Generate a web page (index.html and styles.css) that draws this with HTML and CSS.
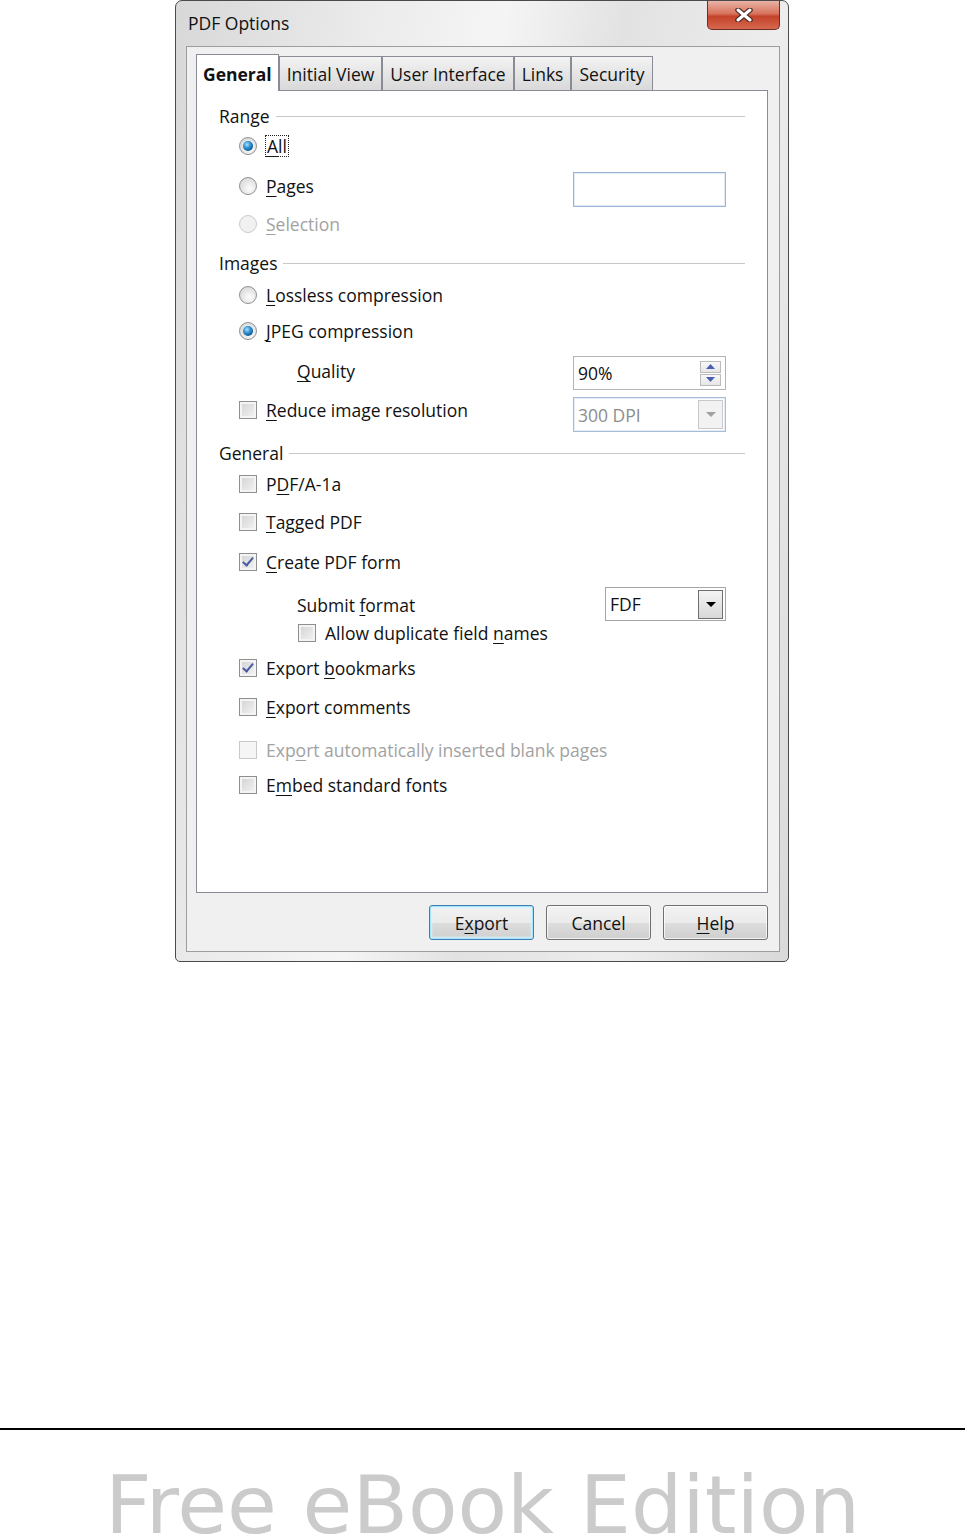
FILE: index.html
```html
<!DOCTYPE html>
<html lang="en">
<head>
    <meta charset="UTF-8">
    <meta name="viewport" content="width=device-width, initial-scale=1.0">
    <title>PDF Options</title>
    <link rel="stylesheet" href="styles.css">
</head>
<body>
    <div class="window">
        <div class="titlebar">
            <span class="title">PDF Options</span>
            <div class="close">
                <svg width="22" height="14" viewBox="0 0 22 14">
                    <path d="M5 2 L17 12 M17 2 L5 12" stroke="#4a2a2a" stroke-width="5.5" stroke-linecap="round"/>
                    <path d="M5 2 L17 12 M17 2 L5 12" stroke="#fff" stroke-width="3" stroke-linecap="round"/>
                </svg>
            </div>
        </div>

        <div class="client">
            <div class="tabs">
                <div class="tab active">General</div>
                <div class="tab">Initial View</div>
                <div class="tab">User Interface</div>
                <div class="tab">Links</div>
                <div class="tab">Security</div>
            </div>

            <div class="panel">
                <!-- Range -->
                <div class="group">Range</div>
                <div class="row opt mt-6"><span class="radio checked"></span><span class="focus"><u>A</u>ll</span></div>
                <div class="row tall opt mt-14">
                    <span class="line mt-in-2"><span class="radio"></span><span><u>P</u>ages</span></span>
                    <div class="textbox pages"></div>
                </div>
                <div class="row opt disabled mt-5"><span class="radio"></span><span><u>S</u>election</span></div>

                <!-- Images -->
                <div class="group mt-15">Images</div>
                <div class="row opt mt-8"><span class="radio"></span><span><u>L</u>ossless compression</span></div>
                <div class="row opt mt-12"><span class="radio checked"></span><span><u>J</u>PEG compression</span></div>
                <div class="row tall sub mt-13">
                    <span class="line mt-in-3"><span><u>Q</u>uality</span></span>
                    <div class="textbox spin">
                        <span class="val">90%</span>
                        <div class="spinbtns">
                            <span class="sb"><svg width="9" height="5" viewBox="0 0 9 5"><path d="M0 5 L4.5 0 L9 5Z" fill="#4a5fae"/></svg></span>
                            <span class="sb"><svg width="9" height="5" viewBox="0 0 9 5"><path d="M0 0 L4.5 5 L9 0Z" fill="#4a5fae"/></svg></span>
                        </div>
                    </div>
                </div>
                <div class="row tall opt mt-7">
                    <span class="line mt-in-1"><span class="check"></span><span><u>R</u>educe image resolution</span></span>
                    <div class="textbox combo off">
                        <span class="val">300 DPI</span>
                        <span class="drop"><svg width="10" height="5" viewBox="0 0 10 5"><path d="M0 0 L5 5 L10 0Z" fill="#a0a0a0"/></svg></span>
                    </div>
                </div>

                <!-- General -->
                <div class="group mt-9">General</div>
                <div class="row opt mt-7"><span class="check"></span><span>P<u>D</u>F/A-1a</span></div>
                <div class="row opt mt-14"><span class="check"></span><span><u>T</u>agged PDF</span></div>
                <div class="row opt mt-16"><span class="check on"></span><span><u>C</u>reate PDF form</span></div>
                <div class="row tall sub mt-13">
                    <span class="line mt-in-6"><span>Submit <u>f</u>ormat</span></span>
                    <div class="textbox combo fdf">
                        <span class="val">FDF</span>
                        <span class="drop"><svg width="10" height="5" viewBox="0 0 10 5"><path d="M0 0 L5 5 L10 0Z" fill="#000"/></svg></span>
                    </div>
                </div>
                <div class="row sub2"><span class="check"></span><span>Allow duplicate field <u>n</u>ames</span></div>
                <div class="row opt mt-11"><span class="check on"></span><span>Export <u>b</u>ookmarks</span></div>
                <div class="row opt mt-15"><span class="check"></span><span><u>E</u>xport comments</span></div>
                <div class="row opt disabled mt-19"><span class="check"></span><span>Exp<u>o</u>rt automatically inserted blank pages</span></div>
                <div class="row opt mt-11"><span class="check"></span><span>E<u>m</u>bed standard fonts</span></div>
            </div>

            <div class="actions">
                <button class="btn default">E<u>x</u>port</button>
                <button class="btn">Cancel</button>
                <button class="btn"><u>H</u>elp</button>
            </div>
        </div>
    </div>

    <div class="rule"></div>
    <div class="watermark">Free eBook Edition</div>
</body>
</html>
```

FILE: styles.css
```css
html, body {
    margin: 0;
    height: 1539px;
    overflow: hidden;
    background-color: #fff;
}

body {
    font-family: "Open Sans", "Noto Sans", sans-serif;
    font-size: 17.5px;
    color: #111;
}

u {
    text-decoration-thickness: 1px;
    text-underline-offset: 3px;
}

/* window frame */
.window {
    margin-left: 175px;
    width: 614px;
    height: 962px;
    box-sizing: border-box;
    border: 1px solid #4a4a4a;
    border-radius: 7px 7px 5px 5px;
    background: linear-gradient(100deg, #d8d8d8 0%, #ebebeb 25%, #f5f5f5 42%, #e2e2e2 58%, #ededed 78%, #d9d9d9 100%);
    display: flex;
    flex-direction: column;
}

.titlebar {
    height: 45px;
    display: flex;
    justify-content: space-between;
    align-items: flex-start;
}

.title {
    margin: 10px 0 0 12px;
    line-height: 24px;
    color: #111;
}

.close {
    width: 73px;
    height: 29px;
    margin-right: 8px;
    box-sizing: border-box;
    border: 1px solid #6e2c22;
    border-top: none;
    border-radius: 0 0 5px 5px;
    background: linear-gradient(#e8b3a6 0%, #d8735d 45%, #c4432b 55%, #d5684f 100%);
    display: flex;
    align-items: center;
    justify-content: center;
}

.client {
    flex: 1;
    margin: 0 8px 9px 10px;
    padding: 7px 11px 11px 9px;
    border: 1px solid #9d9d9d;
    background-color: #f0f0f0;
    display: flex;
    flex-direction: column;
}

/* tabs */
.tabs {
    display: flex;
    align-items: flex-end;
    height: 36px;
}

.tab {
    height: 34px;
    box-sizing: border-box;
    padding: 0 7px;
    border: 1px solid #898c95;
    border-bottom: none;
    background: linear-gradient(#f3f3f3, #e5e5e5 50%, #d9d9d9);
    line-height: 34px;
    white-space: nowrap;
}

.tab.active {
    height: 37px;
    margin-bottom: -1px;
    padding: 0 6px;
    background: #fff;
    font-weight: bold;
    line-height: 38px;
    position: relative;
    z-index: 1;
}

.panel {
    flex: 1;
    border: 1px solid #898c95;
    background-color: #fff;
    padding: 13px 22px 0 22px;
}

/* rows */
.group {
    display: flex;
    align-items: center;
    height: 24px;
}

.group::after {
    content: "";
    flex: 1;
    height: 1px;
    margin-left: 6px;
    background-color: #c8c8c8;
}

.row {
    display: flex;
    align-items: center;
    height: 24px;
    white-space: nowrap;
}

.row.tall {
    height: auto;
    align-items: flex-start;
}

.line {
    display: flex;
    align-items: center;
    height: 24px;
}

.opt {
    padding-left: 20px;
}

.sub {
    padding-left: 78px;
}

.sub2 {
    padding-left: 79px;
}

.disabled {
    color: #a2a2a2;
}

.focus {
    outline: 1px dotted #222;
    outline-offset: 0;
    padding: 0 1px;
    line-height: 20px;
}

.mt-5 { margin-top: 5px; }
.mt-6 { margin-top: 6px; }
.mt-7 { margin-top: 7px; }
.mt-8 { margin-top: 8px; }
.mt-9 { margin-top: 9px; }
.mt-11 { margin-top: 11px; }
.mt-12 { margin-top: 12px; }
.mt-13 { margin-top: 13px; }
.mt-14 { margin-top: 14px; }
.mt-15 { margin-top: 15px; }
.mt-16 { margin-top: 16px; }
.mt-19 { margin-top: 19px; }
.mt-in-1 { margin-top: 1px; }
.mt-in-2 { margin-top: 2px; }
.mt-in-3 { margin-top: 3px; }
.mt-in-6 { margin-top: 6px; }

/* radio and check */
.radio {
    width: 18px;
    height: 18px;
    box-sizing: border-box;
    margin-right: 9px;
    border: 1px solid #8f9195;
    border-radius: 50%;
    background: radial-gradient(circle at 60% 65%, #fdfdfd 0%, #e8e8e8 45%, #cfcfcf 100%);
    display: flex;
    align-items: center;
    justify-content: center;
    flex: none;
}

.radio.checked::after {
    content: "";
    width: 10px;
    height: 10px;
    border-radius: 50%;
    background: radial-gradient(circle at 40% 35%, #a8e4ff 0%, #3c9ad6 35%, #0b5d9e 70%, #063a66 100%);
}

.disabled .radio {
    border-color: #cbcbcb;
    background: #f1f1f1;
}

.check {
    width: 18px;
    height: 18px;
    box-sizing: border-box;
    margin-right: 9px;
    border: 1px solid #8e8f8f;
    background: linear-gradient(135deg, #d2d2d2, #f4f4f4);
    box-shadow: inset 0 0 0 2px #f4f4f4;
    flex: none;
    position: relative;
}

.check.on::after {
    content: "";
    position: absolute;
    left: 5px;
    top: 1px;
    width: 4px;
    height: 9px;
    border: solid #4a5da4;
    border-width: 0 2.5px 2.5px 0;
    transform: rotate(40deg);
}

.disabled .check {
    border-color: #c9c9c9;
    background: #f5f5f5;
    box-shadow: none;
}

/* fields */
.textbox {
    margin-left: auto;
    margin-right: 19px;
    width: 153px;
    height: 35px;
    box-sizing: border-box;
    border: 1px solid #abadb3;
    background-color: #fff;
    display: flex;
    align-items: center;
}

.textbox.pages {
    border-color: #9ab4d3;
    box-shadow: inset 0 0 0 1px #e2eaf4;
}

.textbox .val {
    flex: 1;
    padding-left: 4px;
}

.textbox.spin {
    height: 34px;
    border-color: #b4b4b4;
}

.spinbtns {
    display: flex;
    flex-direction: column;
    gap: 1px;
    margin-right: 4px;
}

.sb {
    width: 21px;
    height: 12px;
    box-sizing: border-box;
    border: 1px solid #bcbcbc;
    background: linear-gradient(#f8f8f8, #e6e6e6);
    display: flex;
    align-items: center;
    justify-content: center;
}

.drop {
    width: 25px;
    height: 29px;
    margin-right: 2px;
    box-sizing: border-box;
    border: 1px solid #707070;
    background: linear-gradient(#f4f4f4, #e6e6e6 50%, #d8d8d8);
    display: flex;
    align-items: center;
    justify-content: center;
}

.combo.off {
    border-color: #a7bcd6;
    box-shadow: inset 0 0 0 1px #e5ecf5;
    color: #8d8d8d;
}

.combo.off .drop {
    border-color: #c9c9c9;
    background: #f2f2f2;
}

.combo.fdf {
    width: 121px;
    height: 34px;
    border-color: #a5a5a5;
}

.combo.fdf .val {
    padding-left: 4px;
}

/* buttons */
.actions {
    display: flex;
    justify-content: flex-end;
    gap: 12px;
    margin-top: 12px;
}

.btn {
    width: 105px;
    height: 35px;
    border: 1px solid #707070;
    border-radius: 3px;
    background: linear-gradient(#f2f2f2 0%, #ebebeb 50%, #dddddd 51%, #cfcfcf 100%);
    box-shadow: inset 0 0 0 1px rgba(255, 255, 255, 0.7);
    font: inherit;
    color: #111;
    padding: 0;
}

.btn.default {
    border-color: #3c7fb1;
    box-shadow: inset 0 0 0 1px #a6e4fb, inset 0 0 2px 2px #d4f1fd;
}

/* page footer */
.rule {
    height: 2px;
    margin-top: 466px;
    background-color: #000;
}

.watermark {
    margin-top: 35px;
    font-family: "DejaVu Sans", sans-serif;
    font-size: 81px;
    line-height: 81px;
    text-align: center;
    color: #cbcbcb;
    white-space: nowrap;
}
```
